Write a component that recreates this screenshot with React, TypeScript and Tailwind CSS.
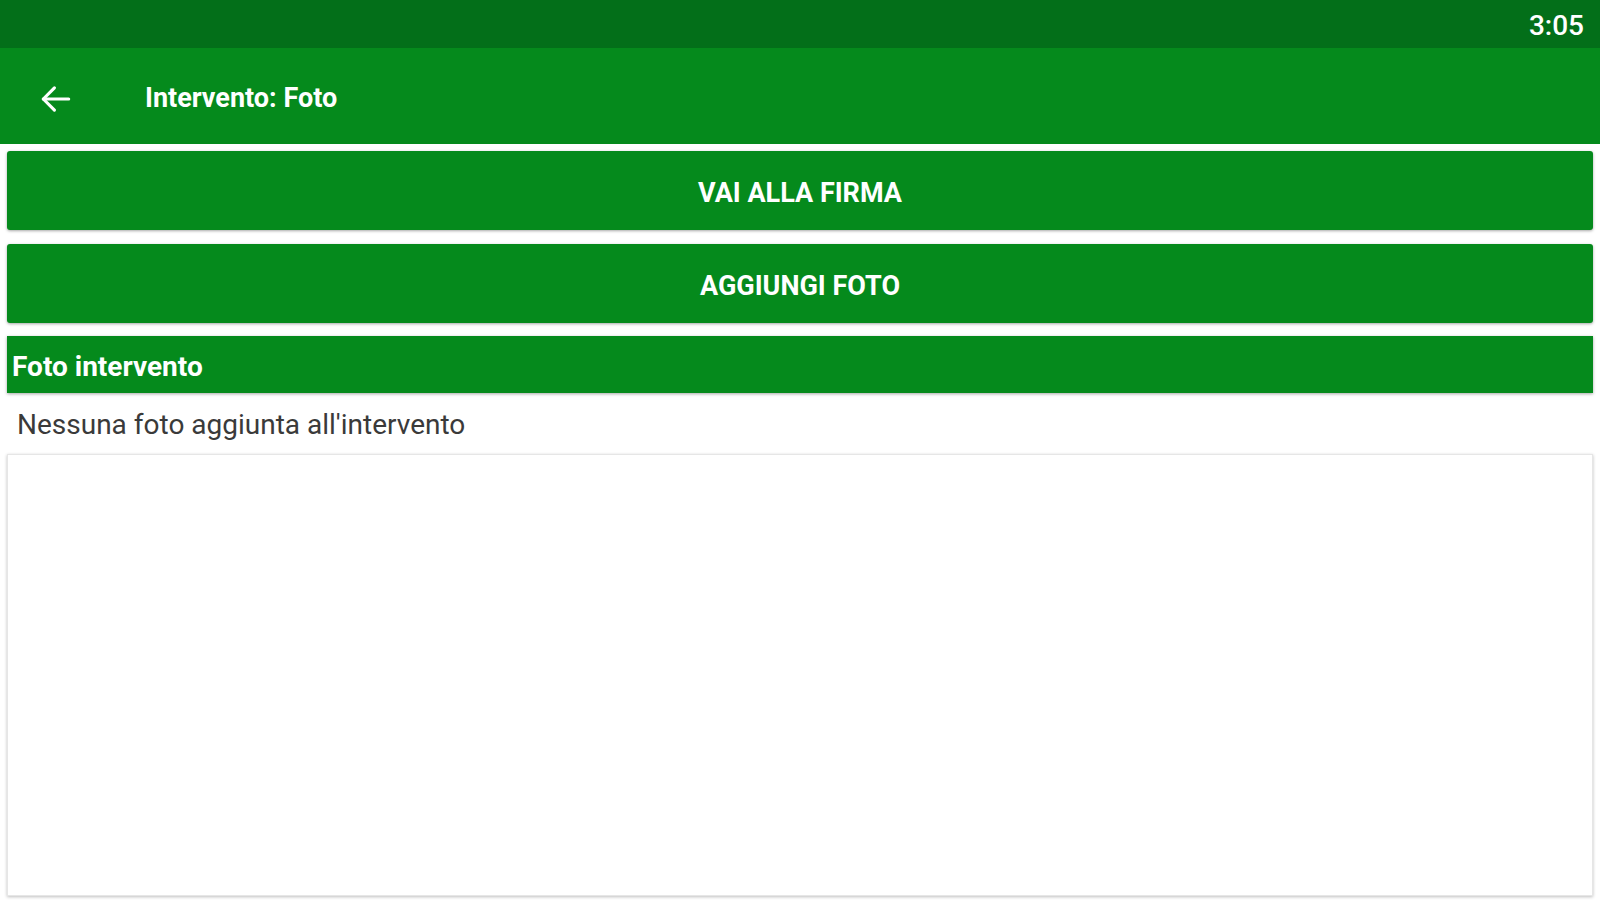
import React from "react";

export default function App() {
  return (
    <div className="w-[1600px] h-[900px] flex flex-col bg-white overflow-hidden" style={{ fontFamily: "Roboto, 'Liberation Sans', sans-serif" }}>
      <div className="h-[48px] bg-[#036f19] flex items-center justify-end pr-[16px] pt-[4px] shrink-0">
        <span className="text-white text-[28px] font-medium leading-none">3:05</span>
      </div>
      <div className="h-[96px] bg-[#058a1c] flex items-center pt-[5px] shrink-0">
        <div className="w-[145px] flex items-center pl-[37px]">
          <svg width="38" height="38" viewBox="0 0 24 24" fill="none" stroke="white" strokeWidth="2" strokeLinecap="round" strokeLinejoin="round">
            <path d="M20 12H4" />
            <path d="M11 5l-7 7 7 7" />
          </svg>
        </div>
        <span className="text-white text-[27px] font-bold leading-none">Intervento: Foto</span>
      </div>
      <div className="flex-1 flex flex-col px-[7px] pt-[7px] pb-[4px]">
        <button className="h-[79px] pt-[6px] rounded-[3px] bg-[#058a1c] shadow-[0_1px_3px_rgba(0,0,0,0.35)] text-white text-[27px] font-bold flex items-center justify-center">
          VAI ALLA FIRMA
        </button>
        <button className="mt-[14px] h-[79px] pt-[5px] rounded-[3px] bg-[#058a1c] shadow-[0_1px_3px_rgba(0,0,0,0.35)] text-white text-[27px] font-bold flex items-center justify-center">
          AGGIUNGI FOTO
        </button>
        <div className="mt-[13px] h-[57px] pt-[4px] bg-[#058a1c] shadow-[0_1px_3px_rgba(0,0,0,0.35)] flex items-center pl-[5px]">
          <span className="text-white text-[28px] font-bold leading-none">Foto intervento</span>
        </div>
        <div className="h-[61px] flex items-center pl-[10px] pt-[3px]">
          <span className="text-[#3a3a3a] text-[28px] leading-none">Nessuna foto aggiunta all'intervento</span>
        </div>
        <div className="flex-1 bg-white shadow-[0_1px_3px_rgba(0,0,0,0.25)] border border-[#e6e6e6]"></div>
      </div>
    </div>
  );
}
